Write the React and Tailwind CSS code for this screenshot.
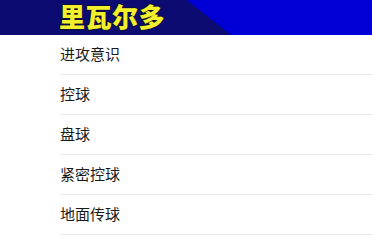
import React from 'react'

const ITEMS = ['进攻意识', '控球', '盘球', '紧密控球', '地面传球']

export default function App() {
  return (
    <div className="w-[372px] h-[248px] overflow-hidden bg-white font-['Noto_Sans_CJK_SC','Noto_Sans',sans-serif]">
      <header className="relative h-[35px] bg-[#0000d6]">
        <svg className="absolute inset-0" width="372" height="35" viewBox="0 0 372 35" preserveAspectRatio="none">
          <polygon points="0,0 187,0 231,35 0,35" fill="#0b0b72" />
        </svg>
        <h1 className="relative pl-[59px] pt-[1px] text-[26px] leading-[30px] font-black text-[#f2f02c] tracking-[0.5px] [-webkit-text-stroke:1.5px_#10102a] [paint-order:stroke_fill]">
          里瓦尔多
        </h1>
      </header>
      <ul className="pl-[60px]">
        {ITEMS.map(item => (
          <li key={item} className="h-[40px] flex items-center border-b border-[#e9e9e9] text-[15px] text-[#1a1a1a] pb-[1px]">
            {item}
          </li>
        ))}
      </ul>
    </div>
  )
}
